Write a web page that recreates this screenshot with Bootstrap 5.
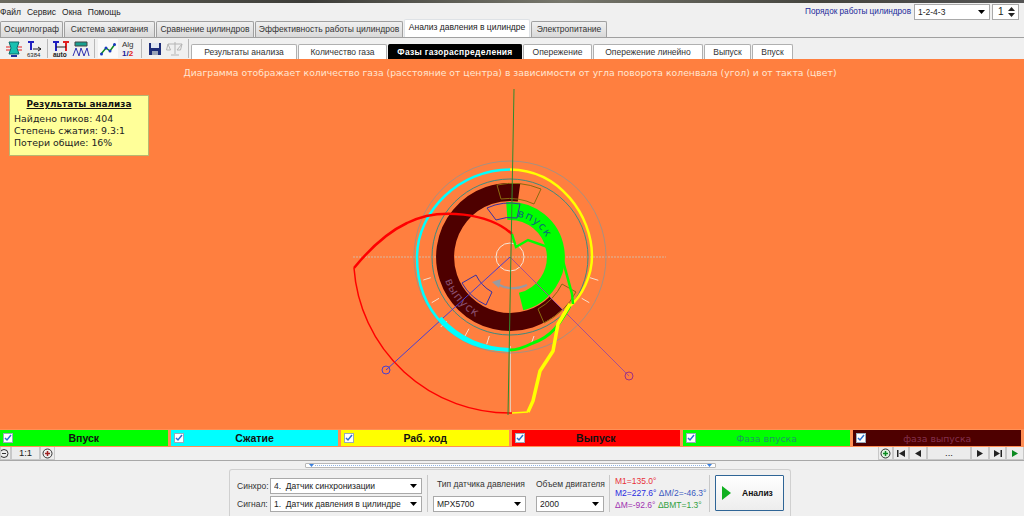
<!DOCTYPE html>
<html lang="en">
<head>
    <meta charset="UTF-8">
    <meta name="viewport" content="width=device-width, initial-scale=1">
    <title>Анализ давления в цилиндре</title>
    <link href="https://cdn.jsdelivr.net/npm/bootstrap@5.3.0/dist/css/bootstrap.min.css" rel="stylesheet">
    <style>
        html, body { height: 516px; overflow: hidden; }
        body { background: #f0f0f0; font: 8.5px "Liberation Sans", Arial, sans-serif; color: #222; }
        .app-strip { height: 3px; background: linear-gradient(90deg, #6b6b60, #3c3c38 30%, #77776c 55%, #44443e 80%, #555); }
        .menu-row { height: 18px; }
        .menu-row span { line-height: 18px; }
        .menu-items { gap: 6px; }
        .order-label { color: #1a2a9a; margin-right: 3px; font-size: 8.2px; }
        .win-select { height: 16px; padding: 0 14px 0 3px; font-size: 8.5px; line-height: 14px; border: 1px solid #a9a9a9; border-radius: 0; color: #222; font-family: "Liberation Sans", Arial, sans-serif;
            background-image: url("data:image/svg+xml,%3Csvg xmlns='http://www.w3.org/2000/svg' width='7' height='4'%3E%3Cpath d='M0 0h7L3.500 4z' fill='%23000'/%3E%3C/svg%3E");
            background-size: 7px 4px; background-position: right 4px center; box-shadow: none; }
        .order-select { width: 76px; margin-right: 2px; }
        .spin-box { width: 27px; height: 16px; background: #fff; border: 1px solid #a9a9a9; padding-left: 5px; line-height: 14px; position: relative; margin-right: 5px; font-size: 10px; }
        .spin-box svg { position: absolute; right: 3px; top: 2px; }
        .main-tabs { height: 17px; border-bottom: 1px solid #a0a0a0; padding: 0; flex-wrap: nowrap; }
        .main-tabs .nav-link { height: 16px; margin: 0 1px 0 0; padding: 0; text-align: center; line-height: 15px; font-size: 8.5px; color: #333; background: linear-gradient(#f0f0f0, #d9d9d9); border: 1px solid #a0a0a0; border-bottom: 0; border-radius: 2px 2px 0 0; }
        .main-tabs .nav-link.active { height: 18px; margin-top: -2px; background: #fff; color: #222; }
        .tool-row { height: 21px; }
        .tool-btn { width: 20px; height: 19px; display: flex; align-items: center; justify-content: center; }
        .tool-btn.is-on { background: #fafafa; }
        .tool-sep { width: 1px; height: 19px; background: #b8b8b8; margin: 0 3px; }
        .sub-tabs { flex-wrap: nowrap; margin-left: -1px; align-self: flex-end; gap: 1px; }
        .sub-tabs .nav-link { height: 15px; padding: 0; line-height: 15px; text-align: center; font-size: 8.5px; color: #333; background: #fff; border: 1px solid #b0b0b0; border-bottom: 0; border-radius: 2px 2px 0 0; }
        .sub-tabs .nav-link.active { background: #000; border-color: #000; color: #fff; font-weight: 700; letter-spacing: .3px; }
        .plot-area { height: 370px; background: #ff7f3f; position: relative; flex: none; }
        .plot-area svg { display: block; }
        .plot-title { position: absolute; left: 0; right: 4px; top: 8px; text-align: center; color: #ffe6d2; font: 9.270px "DejaVu Sans", Verdana, sans-serif; }
        .result-box { position: absolute; left: 9px; top: 36px; width: 140px; height: 61px; background: #ffff99; border: 1px solid #b8b870; padding: 2px 4px; font: 9.400px/12px "DejaVu Sans", Verdana, sans-serif; color: #222; }
        .result-box h6 { font: 700 8.900px/13px "DejaVu Sans", Verdana, sans-serif; text-decoration: underline; text-align: center; margin: 0 0 2px; color: #111; }
        .legend-row { height: 18px; gap: 2px; padding-right: 2px; background: #ff8f55; }
        .legend-cell { flex: 1 1 0; height: 18px; position: relative; text-align: center; font: 700 10.500px/17px "Liberation Sans", Arial, sans-serif; color: #111; border: 1px solid #ff8f55; border-left-width: 0; }
        .legend-cell .form-check-input { position: absolute; left: 3px; top: 3px; width: 10px; height: 10px; margin: 0; border-radius: 0; border-color: #9ab; background-size: 10px; background-color: #fff; opacity: 1; }
        .legend-cell .form-check-input:checked { background-color: #fff; border-color: #9ab; background-image: url("data:image/svg+xml,%3Csvg xmlns='http://www.w3.org/2000/svg' viewBox='0 0 10 10'%3E%3Cpath d='M2 5l2 2 4-5' fill='none' stroke='%232b6fd0' stroke-width='1.500'/%3E%3C/svg%3E"); }
        .leg-in { background: #0f0; }
        .leg-comp { background: #0ff; }
        .leg-work { background: #ff0; }
        .leg-out { background: #f00; }
        .leg-phase-in { background: #0f0; color: #1c9a60; font-weight: 400; font-size: 9.300px; font-family: "DejaVu Sans", sans-serif; }
        .leg-phase-out { background: #4e0000; color: #84304e; font-weight: 400; font-size: 9.300px; font-family: "DejaVu Sans", sans-serif; }
        .scale-row { height: 14px; border-bottom: 1px solid #a8a8a8; }
        .scale-btn { height: 13px; min-width: 15px; padding: 0; background: #ececec; border: 1px solid #c8c8c8; border-top: 0; border-radius: 0; display: flex; align-items: center; justify-content: center; font-size: 9.500px; color: #222; line-height: 12px; }
        .splitter-bar { width: 411px; height: 5px; margin: 2px 0 1px 305px; background: #fff; border: 1px solid #b8b8b8; position: relative; border-radius: 1px; flex: none; display: flex; justify-content: space-between; padding: 0 3px; }
        .splitter-bar::before { content: ""; position: absolute; left: 9px; right: 9px; top: 1px; border-top: 1px dotted #8fb4e6; }
        .control-panel { width: 562px; height: 47px; margin-left: 229px; background: #f0f0f0; border: 1px solid #d0d0d0; border-bottom: 0; border-radius: 3px 3px 0 0; padding: 3px 5px 0 7px; }
        .pick-label { width: 33px; color: #333; }
        .pick-row { height: 18px; }
        .sync-select { width: 152px; }
        .field-top { line-height: 14px; margin-bottom: 5px; color: #333; white-space: nowrap; }
        .panel-sep { width: 1px; height: 37px; background: #c8c8c8; margin: 2px 5px 0; }
        .engine-field { width: 68px; margin-left: 10px; }
        .readouts { width: 89px; line-height: 12px; padding-top: 2px; white-space: nowrap; }
        .analyze-btn { width: 69px; height: 36px; margin-top: 2px; padding: 0 0 0 6px; border: 1px solid #2f6596; border-radius: 1px; background: linear-gradient(#fff, #ededed); font: 700 8.500px "Liberation Sans", Arial, sans-serif; color: #111; gap: 11px; }
    </style>
</head>
<body class="d-flex flex-column">

    <div class="app-strip"></div>

    <!-- menu -->
    <div class="menu-row d-flex justify-content-between align-items-center">
        <div class="menu-items d-flex"><span>Файл</span><span>Сервис</span><span>Окна</span><span>Помощь</span></div>
        <div class="d-flex align-items-center">
            <span class="order-label">Порядок работы цилиндров</span>
            <select class="form-select win-select order-select"><option>1-2-4-3</option></select>
            <div class="spin-box">1<svg width="7" height="10"><path d="M0 4L3.500 0 7 4zM0 6h7L3.500 10z" fill="#222"/></svg></div>
        </div>
    </div>

    <!-- main tabs -->
    <ul class="nav nav-tabs main-tabs">
        <li class="nav-item"><a class="nav-link" style="width:63px">Осциллограф</a></li>
        <li class="nav-item"><a class="nav-link" style="width:91px">Система зажигания</a></li>
        <li class="nav-item"><a class="nav-link" style="width:98px">Сравнение цилиндров</a></li>
        <li class="nav-item"><a class="nav-link" style="width:148px">Эффективность работы цилиндров</a></li>
        <li class="nav-item"><a class="nav-link active" style="width:126px">Анализ давления в цилиндре</a></li>
        <li class="nav-item"><a class="nav-link" style="width:76px">Электропитание</a></li>
    </ul>

    <!-- toolbar and second tabs -->
    <div class="tool-row d-flex align-items-center ps-1">
        <div class="tool-btn"><svg width="18" height="18" viewBox="0 0 18 18"><path d="M4 2h10l-2 6 2 6H4l2-6z" fill="#18c0b0" stroke="#0a6a6a"/><path d="M1 7h4M13 7h4M1 10h4M13 10h4" stroke="#e02020"/><path d="M6 15h6v2H6z" fill="#2030a0"/></svg></div>
        <div class="tool-btn"><svg width="18" height="18" viewBox="0 0 18 18"><path d="M3 2h6M6 2v8" stroke="#2020c0" stroke-width="2"/><path d="M8 9h8M13 7l3 2-3 2" stroke="#222" fill="none"/><text x="2" y="17" font-size="6" font-family="Liberation Sans" fill="#222">6384</text></svg></div>
        <div class="tool-sep"></div>
        <div class="tool-btn"><svg width="18" height="18" viewBox="0 0 18 18"><path d="M1 2h6M4 2v9" stroke="#2020c0" stroke-width="2"/><path d="M11 2h6M14 2v9" stroke="#e02020" stroke-width="2"/><path d="M4 7h10" stroke="#222"/><text x="1" y="17" font-size="6.500" font-family="Liberation Sans" font-weight="700" fill="#222">auto</text></svg></div>
        <div class="tool-btn"><svg width="18" height="18" viewBox="0 0 18 18"><path d="M3 2h12v4H3z" fill="#18a090" stroke="#444"/><path d="M1 16l3-8 3 8 2-8 3 8 3-8 2 8" fill="none" stroke="#3030b0"/></svg></div>
        <div class="tool-sep"></div>
        <div class="tool-btn is-on"><svg width="18" height="18" viewBox="0 0 18 18"><path d="M2 14l5-6 4 3 5-7" fill="none" stroke="#108a20" stroke-width="1.500"/><circle cx="2.500" cy="14" r="1.500" fill="#1a3ac0"/><circle cx="7" cy="8" r="1.500" fill="#1a3ac0"/><circle cx="11" cy="11" r="1.500" fill="#1a3ac0"/><circle cx="15.500" cy="4.500" r="1.500" fill="#1a3ac0"/></svg></div>
        <div class="tool-btn"><svg width="18" height="19" viewBox="0 0 18 19"><text x="3" y="8" font-size="8" font-family="Liberation Sans" fill="#333">Alg</text><text x="3" y="17" font-size="8" font-weight="700" font-family="Liberation Sans" fill="#20209a">1/<tspan fill="#e02020">2</tspan></text></svg></div>
        <div class="tool-sep"></div>
        <div class="tool-btn"><svg width="16" height="16" viewBox="0 0 16 16"><path d="M2 2h12v12H2z" fill="#1c2c78"/><path d="M4 2h8v5H4z" fill="#dfe6f0"/><path d="M5 10h6v4H5z" fill="#9aa4b8"/></svg></div>
        <div class="tool-btn"><svg width="18" height="16" viewBox="0 0 18 16"><path d="M9 1v12M5 14h8M2 3h14M2 3L0.500 9h4zM16 3l-1.500 6h-3.500z" fill="none" stroke="#b4b4b4"/></svg></div>
        <div class="tool-sep"></div>
        <ul class="nav sub-tabs">
            <li class="nav-item"><a class="nav-link" style="width:106px">Результаты анализа</a></li>
            <li class="nav-item"><a class="nav-link" style="width:89px">Количество газа</a></li>
            <li class="nav-item"><a class="nav-link active" style="width:134px">Фазы газораспределения</a></li>
            <li class="nav-item"><a class="nav-link" style="width:69px">Опережение</a></li>
            <li class="nav-item"><a class="nav-link" style="width:110px">Опережение линейно</a></li>
            <li class="nav-item"><a class="nav-link" style="width:47px">Выпуск</a></li>
            <li class="nav-item"><a class="nav-link" style="width:41px">Впуск</a></li>
        </ul>
    </div>

    <!-- diagram -->
    <div class="plot-area">
        <svg width="1024" height="370" viewBox="0 58 1024 370" fill="none">
            <!-- guide lines -->
            <path d="M353 256H666" stroke="#d8b8a0" stroke-dasharray="2 1"/>
            <path d="M510.500 345V412" stroke="#e8c8b0"/>
            <circle cx="510" cy="256" r="96" stroke="#a89080"/>
            <circle cx="510" cy="256" r="78" stroke="#3d8a80"/>
            <!-- phase bands -->
            <path d="M519 191.600A65 65 0 1 0 556 302" stroke="#4e0000" stroke-width="18"/>
            <path d="M506.800 210.100A46 46 0 0 1 521.100 300.600" stroke="#00ff00" stroke-width="18"/>
            <path id="inArc" d="M517.100 215.600A41 41 0 0 1 551 256"/>
            <path id="outArc" d="M445.200 279.600A69 69 0 0 0 498 324"/>
            <text font-family="DejaVu Sans" font-size="11" letter-spacing="1" fill="#0a6a7a"><textPath href="#inArc">впуск</textPath></text>
            <text font-family="DejaVu Sans" font-size="11.500" letter-spacing="1" fill="#8a5070"><textPath href="#outArc">выпуск</textPath></text>
            <!-- sectors -->
            <path d="M497 184A74 74 0 0 1 541 188L534 203A59 59 0 0 0 501 198Z" stroke="#8a6a10"/>
            <path d="M544 322A74 74 0 0 0 576 291L562 283A59 59 0 0 1 538 308Z" stroke="#8a6a10"/>
            <path d="M487 207A54 54 0 0 1 520 203L517 217A40 40 0 0 0 496 219Z" stroke="#3a30a0"/>
            <path d="M476 274A39 39 0 0 0 492 291L486 304A54 54 0 0 1 462 282Z" stroke="#3a30a0"/>
            <!-- rotation arrow -->
            <path d="M527 284Q512 291 497 283" stroke="#9a9aa0" stroke-width="2"/>
            <path d="M492 281l9-3-2 9z" fill="#9a9aa0"/>
            <circle cx="510" cy="256" r="14" stroke="#f5e6d8"/>
            <!-- markers -->
            <path d="M510 256L386 369" stroke="#4a40d0"/>
            <circle cx="386" cy="369" r="4" stroke="#4a40d0"/>
            <path d="M510 256L629 375" stroke="#a85090"/>
            <circle cx="629" cy="375" r="4" stroke="#a03080"/>
            <!-- ticks -->
            <path d="M423.300 279L430.700 276.700M431.700 301.700L439 297.300M440.700 326L446.700 320M465 335L469 327.700M486.700 343.300L489.300 335M531.700 341.700L534 335M581.700 297.300L589.300 301.700M590 276.700L598.300 279.300" stroke="#f5e0d0"/>
            <!-- stroke curves -->
            <path d="M510 168.500C460 168.500 417 210 417 256C417 310 455 350 510 349" stroke="#00ffff" stroke-width="2.500"/>
            <path d="M440 317C458 337 480 348 510 349" stroke="#00ffff" stroke-width="4"/>
            <path d="M510 168.500C560 169 592 215 592 255C592 275 582 295 570 305" stroke="#ffff00" stroke-width="2.500"/>
            <path d="M570 305C560 322 553 335 533 342C525 346 518 349 510 349" stroke="#00ff00" stroke-width="3"/>
            <path d="M570 303L558 323L553 350L540 370L533 400L528 411" stroke="#ffff00" stroke-width="3.500"/>
            <path d="M528 411L512 412" stroke="#ffff00" stroke-width="1.500"/>
            <path d="M512 233C490 213 440 205 407 222C390 230 372 245 354 267" stroke="#ff0000" stroke-width="2.500"/>
            <path d="M354 267A156 156 0 0 0 512 412" stroke="#ff0000" stroke-width="1.500"/>
            <path d="M512 233L514 240 516 246 528 239 548 246 563 260 572 293 573 303" stroke="#00ff00" stroke-width="2.500"/>
            <path d="M514 88L508 414" stroke="#2e8b2e"/>
        </svg>
        <div class="plot-title">Диаграмма отображает количество газа (расстояние от центра) в зависимости от угла поворота коленвала (угол) и от такта (цвет)</div>
        <div class="result-box">
            <h6>Результаты анализа</h6>
            <div>Найдено пиков: 404</div>
            <div>Степень сжатия: 9.3:1</div>
            <div>Потери общие: 16%</div>
        </div>
    </div>

    <!-- legend -->
    <div class="legend-row d-flex">
        <div class="legend-cell leg-in"><input class="form-check-input" type="checkbox" checked>Впуск</div>
        <div class="legend-cell leg-comp"><input class="form-check-input" type="checkbox" checked>Сжатие</div>
        <div class="legend-cell leg-work"><input class="form-check-input" type="checkbox" checked>Раб. ход</div>
        <div class="legend-cell leg-out"><input class="form-check-input" type="checkbox" checked>Выпуск</div>
        <div class="legend-cell leg-phase-in"><input class="form-check-input" type="checkbox" checked>Фаза впуска</div>
        <div class="legend-cell leg-phase-out"><input class="form-check-input" type="checkbox" checked>фаза выпуска</div>
    </div>

    <!-- scale and playback -->
    <div class="scale-row d-flex justify-content-between">
        <div class="d-flex">
            <div class="scale-btn" style="min-width:10px"><svg width="9" height="9"><circle cx="3" cy="4.500" r="4" fill="#eee" stroke="#333"/><path d="M1 4.500h4" stroke="#333"/></svg></div>
            <div class="scale-btn" style="width:29px">1:1</div>
            <div class="scale-btn" style="width:13px"><svg width="11" height="11"><circle cx="5.500" cy="5.500" r="4.500" fill="#eee" stroke="#333"/><path d="M3 5.500h5M5.500 3v5" stroke="#a02020" stroke-width="1.500"/></svg></div>
        </div>
        <div class="d-flex">
            <div class="scale-btn" style="width:13px"><svg width="11" height="11"><circle cx="5.500" cy="5.500" r="4.500" fill="#dff0df" stroke="#333"/><path d="M3 5.500h5M5.500 3v5" stroke="#0a8a20" stroke-width="1.500"/></svg></div>
            <div class="scale-btn" style="width:16px"><svg width="8" height="7"><path d="M0 0h1.500v7H0zM8 0v7L2 3.500z" fill="#222"/></svg></div>
            <div class="scale-btn" style="width:18px"><svg width="6" height="7"><path d="M6 0v7L0 3.500z" fill="#222"/></svg></div>
            <div class="scale-btn" style="width:44px">...</div>
            <div class="scale-btn" style="width:18px"><svg width="6" height="7"><path d="M0 0v7l6-3.500z" fill="#222"/></svg></div>
            <div class="scale-btn" style="width:17px"><svg width="8" height="7"><path d="M0 0v7l6-3.500zM6.500 0H8v7H6.500z" fill="#222"/></svg></div>
            <div class="scale-btn" style="width:18px"><svg width="6" height="7"><path d="M0 0v7l6-3.500z" fill="#0a8a20"/></svg></div>
        </div>
    </div>

    <div class="splitter-bar">
        <svg width="5" height="3"><path d="M0 0h5L2.500 3z" fill="#3a80e0"/></svg>
        <svg width="5" height="3"><path d="M0 0h5L2.500 3z" fill="#3a80e0"/></svg>
    </div>

    <!-- control panel -->
    <div class="control-panel d-flex">
        <div class="pt-1">
            <div class="pick-row d-flex align-items-center"><span class="pick-label">Синхро:</span><select class="form-select win-select sync-select"><option>4.&nbsp; Датчик синхронизации</option></select></div>
            <div class="pick-row d-flex align-items-center"><span class="pick-label">Сигнал:</span><select class="form-select win-select sync-select"><option>1.&nbsp; Датчик давления в цилиндре</option></select></div>
        </div>
        <div class="panel-sep"></div>
        <div style="width:93px">
            <div class="field-top ps-1 pt-1">Тип датчика давления</div>
            <select class="form-select win-select"><option>MPX5700</option></select>
        </div>
        <div class="engine-field">
            <div class="field-top pt-1">Объем двигателя</div>
            <select class="form-select win-select"><option>2000</option></select>
        </div>
        <div class="panel-sep"></div>
        <div class="readouts">
            <div style="color:#e8303a">M1=135.0°</div>
            <div><span style="color:#2a2ae0">M2=227.6°</span> <span style="color:#3a5ac0">ΔM/2=-46.3°</span></div>
            <div><span style="color:#a030b0">ΔM=-92.6°</span> <span style="color:#30a040">ΔBMT=1.3°</span></div>
        </div>
        <div class="panel-sep"></div>
        <button type="button" class="btn analyze-btn d-flex align-items-center"><svg width="9" height="14"><path d="M0 0l9 7-9 7z" fill="#10b020"/></svg>Анализ</button>
    </div>

    <script src="https://cdn.jsdelivr.net/npm/bootstrap@5.3.0/dist/js/bootstrap.bundle.min.js"></script>
</body>
</html>
